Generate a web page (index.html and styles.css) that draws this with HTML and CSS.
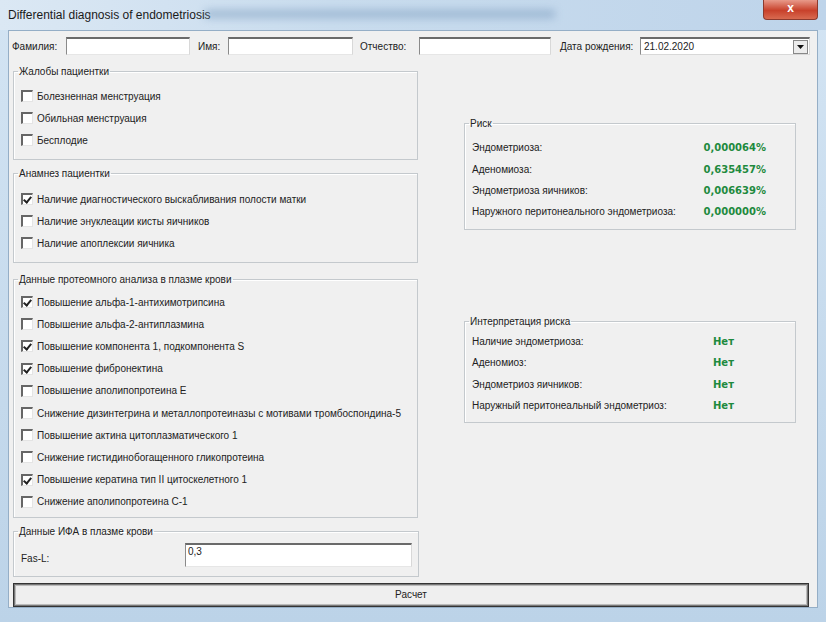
FILE: index.html
```html
<!DOCTYPE html>
<html lang="ru">

<head>
    <meta charset="utf-8">
    <title>Differential diagnosis of endometriosis</title>
    <link rel="stylesheet" href="styles.css">
</head>

<body>
    <div class="vindue">
        <div class="titel">
            <span class="titeltekst">Differential diagnosis of endometriosis</span>
            <span class="sloer"></span>
            <div class="luk">x</div>
        </div>

        <div class="klient">
            <div class="toprække">
                <label class="lbl l1">Фамилия:</label>
                <div class="felt f1"></div>
                <label class="lbl l2">Имя:</label>
                <div class="felt f2"></div>
                <label class="lbl l3">Отчество:</label>
                <div class="felt f3"></div>
                <label class="lbl l4">Дата рождения:</label>
                <div class="dato">
                    <span>21.02.2020</span>
                    <span class="pil"><svg width="7" height="4" viewBox="0 0 7 4"><path d="M0 0h7L3.5 4z" fill="#111"/></svg></span>
                </div>
            </div>

            <div class="hoved">
                <div class="venstre">
                    <fieldset class="gruppe g1">
                        <legend>Жалобы пациентки</legend>
                        <div class="valg"><span class="boks"></span>Болезненная менструация</div>
                        <div class="valg"><span class="boks"></span>Обильная менструация</div>
                        <div class="valg"><span class="boks"></span>Бесплодие</div>
                    </fieldset>

                    <fieldset class="gruppe g2">
                        <legend>Анамнез пациентки</legend>
                        <div class="valg"><span class="boks tjek"></span>Наличие диагностического выскабливания полости матки</div>
                        <div class="valg"><span class="boks"></span>Наличие энуклеации кисты яичников</div>
                        <div class="valg"><span class="boks"></span>Наличие апоплексии яичника</div>
                    </fieldset>

                    <fieldset class="gruppe g3">
                        <legend>Данные протеомного анализа в плазме крови</legend>
                        <div class="valg"><span class="boks tjek"></span>Повышение альфа-1-антихимотрипсина</div>
                        <div class="valg"><span class="boks"></span>Повышение альфа-2-антиплазмина</div>
                        <div class="valg"><span class="boks tjek"></span>Повышение компонента 1, подкомпонента S</div>
                        <div class="valg"><span class="boks tjek"></span>Повышение фибронектина</div>
                        <div class="valg"><span class="boks"></span>Повышение аполипопротеина E</div>
                        <div class="valg"><span class="boks"></span>Снижение дизинтегрина и металлопротеиназы с мотивами тромбоспондина-5</div>
                        <div class="valg"><span class="boks"></span>Повышение актина цитоплазматического 1</div>
                        <div class="valg"><span class="boks"></span>Снижение гистидинобогащенного гликопротеина</div>
                        <div class="valg"><span class="boks tjek"></span>Повышение кератина тип II цитоскелетного 1</div>
                        <div class="valg"><span class="boks"></span>Снижение аполипопротеина C-1</div>
                    </fieldset>

                    <fieldset class="gruppe g4">
                        <legend>Данные ИФА в плазме крови</legend>
                        <div class="fas">
                            <span class="faslbl">Fas-L:</span>
                            <div class="felt fasfelt">0,3</div>
                        </div>
                    </fieldset>
                </div>

                <div class="hojre">
                    <fieldset class="gruppe risiko">
                        <legend>Риск</legend>
                        <div class="linje"><span>Эндометриоза:</span><b>0,000064%</b></div>
                        <div class="linje"><span>Аденомиоза:</span><b>0,635457%</b></div>
                        <div class="linje"><span>Эндометриоза яичников:</span><b>0,006639%</b></div>
                        <div class="linje"><span>Наружного перитонеального эндометриоза:</span><b>0,000000%</b></div>
                    </fieldset>

                    <fieldset class="gruppe tolkning">
                        <legend>Интерпретация риска</legend>
                        <div class="linje"><span>Наличие эндометриоза:</span><b>Нет</b></div>
                        <div class="linje"><span>Аденомиоз:</span><b>Нет</b></div>
                        <div class="linje"><span>Эндометриоз яичников:</span><b>Нет</b></div>
                        <div class="linje"><span>Наружный перитонеальный эндометриоз:</span><b>Нет</b></div>
                    </fieldset>
                </div>
            </div>

            <button class="beregn">Расчет</button>
        </div>
    </div>
</body>

</html>
```

FILE: styles.css
```css
html,
body {
    margin: 0;
    width: 826px;
    height: 622px;
    overflow: hidden;
}

body {
    font-family: "Liberation Sans", Arial, sans-serif;
    font-size: 11px;
    color: #222;
}

.vindue {
    height: 622px;
    display: flex;
    flex-direction: column;
    background: linear-gradient(#d3e4f3, #bcd3e8);
}

.titel {
    height: 30px;
    position: relative;
    background: linear-gradient(90deg, #dbe8f4 0%, #c9dcee 40%, #bed4ea 100%);
}

.titeltekst {
    display: inline-block;
    padding: 8px 0 0 8px;
    font-size: 12px;
    color: #1a1a1a;
}

.sloer {
    position: absolute;
    left: 205px;
    top: 10px;
    width: 350px;
    height: 8px;
    background: #7f9fc0;
    filter: blur(4px);
    opacity: 0.6;
}

.luk {
    position: absolute;
    right: 8px;
    top: 0;
    width: 53px;
    height: 19px;
    border-radius: 0 0 4px 4px;
    background: linear-gradient(#e89a8a, #c8412b 55%, #d86a50);
    border: 1px solid #8c3a2e;
    border-top: none;
    color: #fff;
    font-weight: bold;
    font-size: 12px;
    text-align: center;
    line-height: 17px;
}

.klient {
    flex: 1;
    margin: 0 8px 14px 8px;
    background: #f0f0f0;
    border: 1px solid #95aec6;
    padding: 6px 7px 0 3px;
    display: flex;
    flex-direction: column;
}

.toprække {
    display: flex;
    align-items: center;
    height: 18px;
}

.lbl {
    font-size: 10px;
}

.l1 { width: 54px; }
.l2 { width: 30px; margin-left: 8px; }
.l3 { width: 59px; margin-left: 7px; }
.l4 { width: 80px; margin-left: 9px; }

.felt {
    box-sizing: border-box;
    height: 18px;
    background: #fff;
    border-top: 2px solid #6a6a6a;
    border-left: 1px solid #8a8a8a;
    border-right: 1px solid #d8d8d8;
    border-bottom: 1px solid #e6e6e6;
}

.f1 { width: 124px; }
.f2 { width: 125px; }
.f3 { width: 132px; }

.dato {
    box-sizing: border-box;
    width: 170px;
    height: 18px;
    background: #fff;
    border-top: 2px solid #6a6a6a;
    border-left: 1px solid #8a8a8a;
    border-right: 1px solid #d8d8d8;
    border-bottom: 1px solid #d8d8d8;
    display: flex;
    align-items: center;
    justify-content: space-between;
    padding-left: 3px;
    font-size: 10px;
}

.pil {
    width: 15px;
    height: 14px;
    margin-right: 1px;
    background: #ececec;
    border: 1px solid #888;
    box-sizing: border-box;
    display: flex;
    align-items: center;
    justify-content: center;
}

.hoved {
    display: flex;
    margin-top: 10px;
}

.venstre {
    width: 405px;
    margin-left: 1px;
}

.gruppe {
    margin: 0;
    border: 1px solid #c4c9cd;
    box-shadow: inset 1px 1px 0 #fff;
    padding: 0 6px 0 7px;
}

.gruppe legend {
    padding: 0 1px;
    margin-left: -3px;
    line-height: 13px;
    font-size: 10px;
}

.valg {
    height: 22px;
    display: flex;
    align-items: center;
    font-size: 10px;
    white-space: nowrap;
}

.g1 { padding-top: 7px; padding-bottom: 8px; }
.g2 { padding-top: 8px; padding-bottom: 8px; margin-top: 7px; }
.g3 { padding-top: 5px; padding-bottom: 4px; margin-top: 10px; }
.g3 .valg { height: 22.2px; }
.g4 { padding-top: 4px; padding-bottom: 8px; margin-top: 7px; }

.boks {
    box-sizing: border-box;
    width: 12px;
    height: 12px;
    margin-right: 4px;
    flex: none;
    background: #fff;
    border-top: 2px solid #666;
    border-left: 2px solid #666;
    border-right: 1px solid #e4e4e4;
    border-bottom: 1px solid #e4e4e4;
    position: relative;
}

.tjek::after {
    content: "";
    position: absolute;
    left: 2px;
    top: 0;
    width: 3px;
    height: 6px;
    border-right: 2px solid #222;
    border-bottom: 2px solid #222;
    transform: rotate(40deg);
}

.fas {
    display: flex;
    align-items: center;
    height: 26px;
}

.faslbl {
    width: 164px;
    padding-top: 8px;
    font-size: 10px;
}

.fasfelt {
    width: 227px;
    height: 24px;
    padding-left: 2px;
    font-size: 10px;
    line-height: 14px;
}

.hojre {
    width: 332px;
    margin-left: 46px;
}

.risiko {
    margin-top: 52px;
    padding-top: 7px;
    padding-bottom: 6px;
}

.tolkning {
    margin-top: 85px;
    padding-top: 3px;
    padding-bottom: 6px;
}

.linje {
    height: 21.4px;
    display: flex;
    align-items: center;
    justify-content: space-between;
    font-size: 10px;
}

.linje b {
    color: #1e8a3e;
    font-family: "DejaVu Sans", sans-serif;
    font-size: 10px;
}

.risiko .linje {
    padding-right: 23px;
}

.tolkning .linje b {
    width: 76px;
}

.beregn {
    margin: 6px 0 0 1px;
    width: 796px;
    height: 24px;
    font-family: "Liberation Sans", Arial, sans-serif;
    font-size: 10px;
    color: #222;
    background: #efefef;
    border: 1px solid #333;
    box-shadow: inset 0 0 0 1px #777, inset 0 0 0 2px #bbb, inset 0 0 0 3px #eee;
}
```
